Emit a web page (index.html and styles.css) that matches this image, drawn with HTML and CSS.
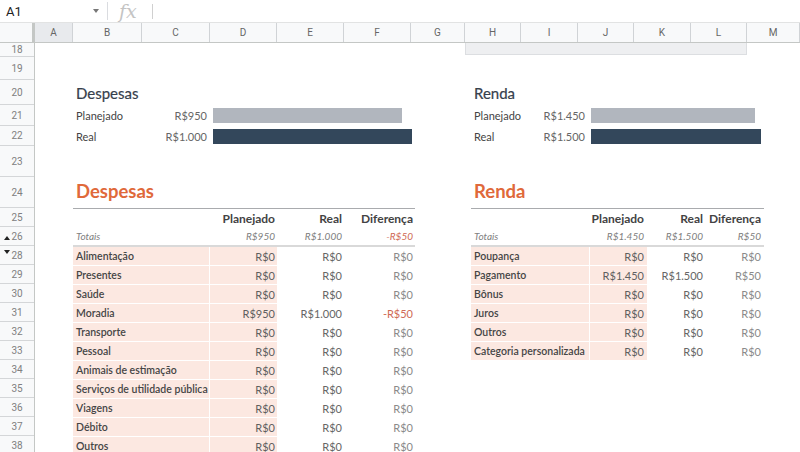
FILE: index.html
```html
<!DOCTYPE html>
<html lang="pt-BR">
<head>
    <meta charset="UTF-8">
    <meta name="viewport" content="width=device-width, initial-scale=1.0">
    <title>Orçamento mensal</title>
    <link rel="stylesheet" href="styles.css">
</head>
<body>

    <div class="formula-bar">
        <div class="name-box">A1<span class="caret"></span></div>
        <div class="fx">fx</div>
        <div class="formula-input"></div>
    </div>

    <div class="col-headers">
        <div class="corner"></div>
        <div class="col selected">A</div>
        <div class="col">B</div>
        <div class="col">C</div>
        <div class="col">D</div>
        <div class="col">E</div>
        <div class="col">F</div>
        <div class="col">G</div>
        <div class="col">H</div>
        <div class="col">I</div>
        <div class="col">J</div>
        <div class="col">K</div>
        <div class="col">L</div>
        <div class="col">M</div>
    </div>

    <div class="sheet">
        <div class="row-headers">
            <div class="rh">18</div>
            <div class="rh">19</div>
            <div class="rh">20</div>
            <div class="rh">21</div>
            <div class="rh">22</div>
            <div class="rh">23</div>
            <div class="rh">24</div>
            <div class="rh">25</div>
            <div class="rh hidden-below">26</div>
            <div class="rh hidden-above">28</div>
            <div class="rh">29</div>
            <div class="rh">30</div>
            <div class="rh">31</div>
            <div class="rh">32</div>
            <div class="rh">33</div>
            <div class="rh">34</div>
            <div class="rh">35</div>
            <div class="rh">36</div>
            <div class="rh">37</div>
            <div class="rh">38</div>
        </div>

        <div class="canvas">
            <div class="band-row"><div class="band"></div></div>

            <div class="panels">
                <!-- Despesas -->
                <div class="panel expenses">
                    <div class="chart">
                        <div class="chart-title">Despesas</div>
                        <div class="chart-row">
                            <div class="chart-label"><span>Planejado</span><span class="chart-value">R$950</span></div>
                            <div class="track"><div class="bar planned" style="width: 95%"></div></div>
                        </div>
                        <div class="chart-row">
                            <div class="chart-label"><span>Real</span><span class="chart-value">R$1.000</span></div>
                            <div class="track"><div class="bar actual" style="width: 100%"></div></div>
                        </div>
                    </div>

                    <div class="section-title">Despesas</div>
                    <div class="table">
                        <div class="trow thead">
                            <div></div><div class="num">Planejado</div><div class="num">Real</div><div class="num">Diferença</div>
                        </div>
                        <div class="trow totals">
                            <div class="name">Totais</div><div class="num">R$950</div><div class="num">R$1.000</div><div class="num neg">-R$50</div>
                        </div>
                        <div class="trow item"><div class="name">Alimentação</div><div class="num">R$0</div><div class="num">R$0</div><div class="num">R$0</div></div>
                        <div class="trow item"><div class="name">Presentes</div><div class="num">R$0</div><div class="num">R$0</div><div class="num">R$0</div></div>
                        <div class="trow item"><div class="name">Saúde</div><div class="num">R$0</div><div class="num">R$0</div><div class="num">R$0</div></div>
                        <div class="trow item"><div class="name">Moradia</div><div class="num">R$950</div><div class="num">R$1.000</div><div class="num neg">-R$50</div></div>
                        <div class="trow item"><div class="name">Transporte</div><div class="num">R$0</div><div class="num">R$0</div><div class="num">R$0</div></div>
                        <div class="trow item"><div class="name">Pessoal</div><div class="num">R$0</div><div class="num">R$0</div><div class="num">R$0</div></div>
                        <div class="trow item"><div class="name">Animais de estimação</div><div class="num">R$0</div><div class="num">R$0</div><div class="num">R$0</div></div>
                        <div class="trow item"><div class="name">Serviços de utilidade pública</div><div class="num">R$0</div><div class="num">R$0</div><div class="num">R$0</div></div>
                        <div class="trow item"><div class="name">Viagens</div><div class="num">R$0</div><div class="num">R$0</div><div class="num">R$0</div></div>
                        <div class="trow item"><div class="name">Débito</div><div class="num">R$0</div><div class="num">R$0</div><div class="num">R$0</div></div>
                        <div class="trow item"><div class="name">Outros</div><div class="num">R$0</div><div class="num">R$0</div><div class="num">R$0</div></div>
                    </div>
                </div>

                <!-- Renda -->
                <div class="panel income">
                    <div class="chart">
                        <div class="chart-title">Renda</div>
                        <div class="chart-row">
                            <div class="chart-label"><span>Planejado</span><span class="chart-value">R$1.450</span></div>
                            <div class="track"><div class="bar planned" style="width: 96.7%"></div></div>
                        </div>
                        <div class="chart-row">
                            <div class="chart-label"><span>Real</span><span class="chart-value">R$1.500</span></div>
                            <div class="track"><div class="bar actual" style="width: 100%"></div></div>
                        </div>
                    </div>

                    <div class="section-title">Renda</div>
                    <div class="table">
                        <div class="trow thead">
                            <div></div><div class="num">Planejado</div><div class="num">Real</div><div class="num">Diferença</div>
                        </div>
                        <div class="trow totals">
                            <div class="name">Totais</div><div class="num">R$1.450</div><div class="num">R$1.500</div><div class="num">R$50</div>
                        </div>
                        <div class="trow item"><div class="name">Poupança</div><div class="num">R$0</div><div class="num">R$0</div><div class="num">R$0</div></div>
                        <div class="trow item"><div class="name">Pagamento</div><div class="num">R$1.450</div><div class="num">R$1.500</div><div class="num">R$50</div></div>
                        <div class="trow item"><div class="name">Bônus</div><div class="num">R$0</div><div class="num">R$0</div><div class="num">R$0</div></div>
                        <div class="trow item"><div class="name">Juros</div><div class="num">R$0</div><div class="num">R$0</div><div class="num">R$0</div></div>
                        <div class="trow item"><div class="name">Outros</div><div class="num">R$0</div><div class="num">R$0</div><div class="num">R$0</div></div>
                        <div class="trow item"><div class="name">Categoria personalizada</div><div class="num">R$0</div><div class="num">R$0</div><div class="num">R$0</div></div>
                    </div>
                </div>
            </div>
        </div>
    </div>

</body>
</html>
```

FILE: styles.css
```css
* {
    box-sizing: border-box;
}
body {
    margin: 0;
    width: 800px;
    height: 452px;
    overflow: hidden;
    background: #fff;
    font-family: Lato, "Open Sans", sans-serif;
    color: #434343;
}

/* formula bar */
.formula-bar {
    display: flex;
    align-items: center;
    height: 23px;
    border-bottom: 1px solid #e2e3e3;
}
.name-box {
    display: flex;
    align-items: center;
    width: 108px;
    height: 18px;
    padding-left: 6px;
    border-right: 1px solid #dadce0;
    font-family: Roboto, Arial, sans-serif;
    font-size: 13px;
    color: #222;
}
.caret {
    margin-left: auto;
    margin-right: 8px;
    border-left: 3px solid transparent;
    border-right: 3px solid transparent;
    border-top: 4px solid #777;
}
.fx {
    width: 44px;
    padding-left: 11px;
    font-family: "DejaVu Serif", "Liberation Serif", serif;
    font-style: italic;
    font-size: 19px;
    color: #c4c4c4;
    line-height: 20px;
}
.formula-input {
    height: 15px;
    border-left: 1px solid #d0d0d0;
}

/* column headers */
.col-headers {
    display: grid;
    grid-template-columns: 35px 38px 69px 68px 67px 67px 67px 54px 56px 57px 56px 57px 56px 1fr;
    height: 20px;
    background: #f8f9fa;
    border-bottom: 1px solid #c4c7c5;
    font-family: Roboto, Arial, sans-serif;
    font-size: 10px;
    color: #666;
}
.corner {
    border-right: 3px solid #c4c7c5;
}
.col {
    display: flex;
    align-items: center;
    justify-content: center;
    border-right: 1px solid #d0d3d6;
}
.col.selected {
    background: #e8eaed;
}

/* sheet */
.sheet {
    display: flex;
}
.row-headers {
    display: grid;
    grid-template-rows: 14px 23px 25px 21px 20px 31px 31px 19px 19px repeat(11, 19px);
    width: 35px;
    flex-shrink: 0;
    background: #f8f9fa;
    border-right: 1px solid #c4c7c5;
    font-family: Roboto, Arial, sans-serif;
    font-size: 10px;
    color: #808080;
}
.rh {
    position: relative;
    display: flex;
    align-items: center;
    justify-content: center;
    border-bottom: 1px solid #d4d6d8;
}
.hidden-below::before,
.hidden-above::before {
    content: "";
    position: absolute;
    left: 4px;
    border-left: 3px solid transparent;
    border-right: 3px solid transparent;
}
.hidden-below::before {
    bottom: 5px;
    border-bottom: 4px solid #222;
}
.hidden-above::before {
    top: 4px;
    border-top: 4px solid #222;
}

.canvas {
    flex: 1;
}
.band-row {
    height: 14px;
    padding-left: 430px;
}
.band {
    width: 282px;
    height: 12px;
    background: #eeeff1;
    border: 1px solid #dcdee1;
    border-top: none;
}

.panels {
    display: flex;
    gap: 56px;
    padding-left: 38px;
}
.panel {
    display: flex;
    flex-direction: column;
}
.expenses {
    width: 342px;
    --label-w: 134px;
    --track-w: 199px;
    --cols: 137px 67px 67px 71px;
}
.income {
    width: 293px;
    --label-w: 114px;
    --track-w: 170px;
    --cols: 119px 57px 59px 58px;
}

/* chart */
.chart {
    padding-top: 23px;
}
.chart-title {
    height: 25px;
    display: flex;
    align-items: flex-end;
    padding: 0 0 3px 3px;
    font-size: 15px;
    color: #36404c;
    -webkit-text-stroke: 0.2px #36404c;
}
.chart-row {
    display: grid;
    grid-template-columns: var(--label-w) var(--track-w);
    column-gap: 6px;
    align-items: center;
    height: 21px;
    font-size: 11px;
    color: #444;
}
.chart-row + .chart-row {
    height: 20px;
}
.chart-label {
    display: flex;
    justify-content: space-between;
    padding-left: 3px;
}
.chart-value {
    color: #666;
}
.bar {
    height: 15px;
}
.bar.planned {
    background: #b1b6be;
}
.bar.actual {
    background: #33475b;
}

/* tables */
.section-title {
    height: 62px;
    display: flex;
    align-items: flex-end;
    padding: 0 0 6px 3px;
    font-size: 18.5px;
    font-weight: bold;
    color: #e0693a;
}
.table {
    border-top: 1px solid #a9abae;
}
.trow {
    display: grid;
    grid-template-columns: var(--cols);
    height: 19px;
    align-items: center;
    font-size: 11px;
}
.trow .name {
    padding-left: 3px;
    white-space: nowrap;
}
.trow .num {
    text-align: right;
    padding-right: 2px;
}
.income .trow .num {
    padding-right: 3px;
}
.thead {
    height: 18px;
    font-size: 12px;
    font-weight: bold;
    color: #434343;
}
.totals {
    height: 20px;
    border-bottom: 2px solid #d9d9d9;
    font-size: 10px;
    font-style: italic;
    color: #808080;
}
.totals .neg {
    color: #cf6a55;
}
.item {
    align-items: stretch;
}
.item > div {
    display: flex;
    align-items: center;
    border-bottom: 1px solid #fff;
}
.item .num {
    justify-content: flex-end;
}
.item .name {
    background: #fce8e1;
    border-right: 1px solid #fff;
    font-size: 10.5px;
    font-weight: 600;
    color: #454545;
}
.item .num:nth-child(2) {
    background: #fce8e1;
    color: #5f5f5f;
}
.item .num:nth-child(3) {
    color: #666;
}
.item .num:nth-child(4) {
    color: #8a8a8a;
}
.item .neg {
    color: #cf6a55 !important;
}
```
